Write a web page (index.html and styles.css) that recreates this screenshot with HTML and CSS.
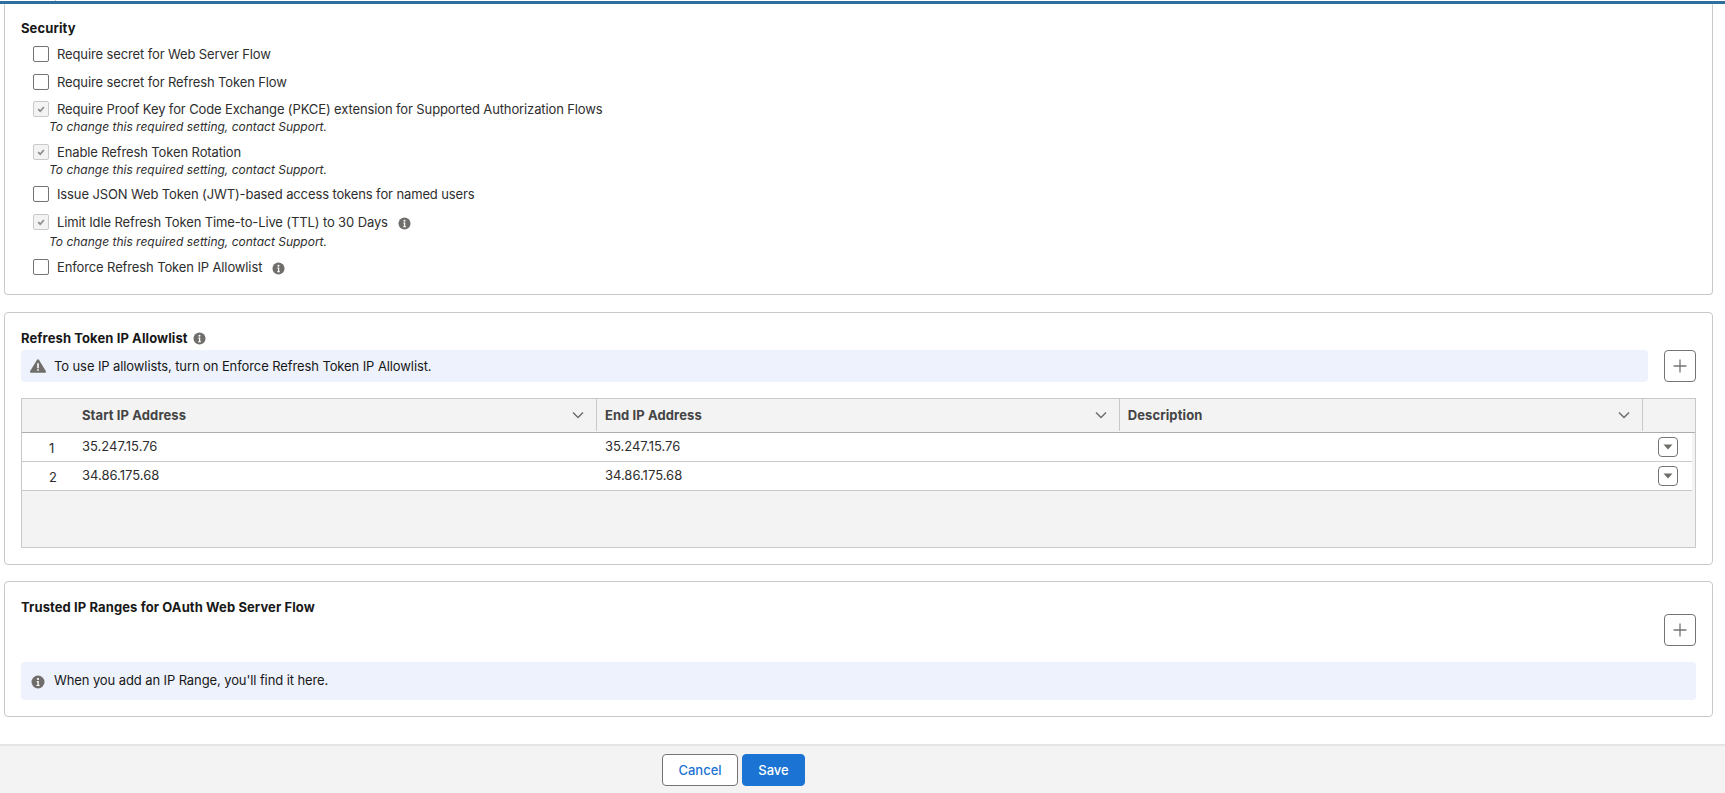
FILE: index.html
```html
<!DOCTYPE html>
<html lang="en">
<head>
    <meta charset="UTF-8">
    <meta name="viewport" content="width=device-width, initial-scale=1.0">
    <title>OAuth Policies</title>
    <link rel="stylesheet" href="styles.css">
</head>
<body>
    <svg class="defs" width="0" height="0">
        <symbol id="info" viewBox="0 0 14 14">
            <circle cx="7" cy="7" r="6.5" fill="#706e6b"/>
            <circle cx="7" cy="4" r="1.1" fill="#fff"/>
            <path d="M5.7 6h2.1v4h.8v1H5.500v-1h.9V7h-.7z" fill="#fff"/>
        </symbol>
        <symbol id="check" viewBox="0 0 16 16">
            <path d="M4.800 8.200l2.300 2.300 4.200-4.800" fill="none" stroke="#8c8c8c" stroke-width="1.900"/>
        </symbol>
        <symbol id="plus" viewBox="0 0 14 14">
            <path d="M7 0.500v13M0.500 7h13" fill="none" stroke="#747474" stroke-width="1.300"/>
        </symbol>
        <symbol id="chevron" viewBox="0 0 12 8">
            <path d="M1 1.500l5 5 5-5" fill="none" stroke="#706e6b" stroke-width="1.500"/>
        </symbol>
        <symbol id="caret" viewBox="0 0 10 6">
            <path d="M0.500 0.500h9L5 5.500z" fill="#706e6b"/>
        </symbol>
    </svg>

    <div class="top-bar"></div>

    <main class="content">
        <section class="card card-security">
            <h3 class="card-title">Security</h3>

            <label class="option"><span class="box"></span>Require secret for Web Server Flow</label>
            <label class="option"><span class="box"></span>Require secret for Refresh Token Flow</label>

            <label class="option tight"><span class="box disabled"><svg class="tick"><use href="#check"/></svg></span>Require Proof Key for Code Exchange (PKCE) extension for Supported Authorization Flows</label>
            <div class="hint">To change this required setting, contact Support.</div>

            <label class="option"><span class="box disabled"><svg class="tick"><use href="#check"/></svg></span>Enable Refresh Token Rotation</label>
            <div class="hint">To change this required setting, contact Support.</div>

            <label class="option tight"><span class="box"></span>Issue JSON Web Token (JWT)-based access tokens for named users</label>

            <label class="option has-help"><span class="box disabled"><svg class="tick"><use href="#check"/></svg></span>Limit Idle Refresh Token Time-to-Live (TTL) to 30 Days<svg class="info help"><use href="#info"/></svg></label>
            <div class="hint">To change this required setting, contact Support.</div>

            <label class="option has-help"><span class="box"></span>Enforce Refresh Token IP Allowlist<svg class="info help"><use href="#info"/></svg></label>
        </section>

        <section class="card card-allowlist">
            <h3 class="card-title">Refresh Token IP Allowlist<svg class="info title-info"><use href="#info"/></svg></h3>

            <div class="banner-row">
                <div class="banner">
                    <svg class="warn" viewBox="0 0 16 14"><path d="M8 0.300c.4 0 .7.2.9.5l6.900 11.300c.4.7 0 1.600-.9 1.600H1.100c-.9 0-1.300-.9-.9-1.600L7.100.8c.2-.3.5-.5.9-.5z" fill="#706e6b"/><path d="M7.200 4.200h1.600v5H7.200zM7.200 10.200h1.600v1.600H7.200z" fill="#fff"/></svg>
                    To use IP allowlists, turn on Enforce Refresh Token IP Allowlist.
                </div>
                <button class="icon-btn"><svg class="plus"><use href="#plus"/></svg></button>
            </div>

            <div class="table">
                <div class="table-head">
                    <div class="th"></div>
                    <div class="th"><span>Start IP Address</span><svg class="chevron"><use href="#chevron"/></svg></div>
                    <div class="th"><span>End IP Address</span><svg class="chevron"><use href="#chevron"/></svg></div>
                    <div class="th"><span>Description</span><svg class="chevron"><use href="#chevron"/></svg></div>
                    <div class="th"></div>
                </div>
                <div class="table-row">
                    <div class="td num">1</div>
                    <div class="td">35.247.15.76</div>
                    <div class="td">35.247.15.76</div>
                    <div class="td"></div>
                    <div class="td action"><button class="row-btn"><svg class="caret"><use href="#caret"/></svg></button></div>
                </div>
                <div class="table-row">
                    <div class="td num">2</div>
                    <div class="td">34.86.175.68</div>
                    <div class="td">34.86.175.68</div>
                    <div class="td"></div>
                    <div class="td action"><button class="row-btn"><svg class="caret"><use href="#caret"/></svg></button></div>
                </div>
            </div>
        </section>

        <section class="card card-ranges">
            <div class="ranges-head">
                <h3 class="card-title">Trusted IP Ranges for OAuth Web Server Flow</h3>
                <button class="icon-btn"><svg class="plus"><use href="#plus"/></svg></button>
            </div>
            <div class="banner banner-tall">
                <svg class="info banner-info"><use href="#info"/></svg>
                When you add an IP Range, you'll find it here.
            </div>
        </section>
    </main>

    <footer class="footer">
        <button class="btn">Cancel</button>
        <button class="btn btn-brand">Save</button>
    </footer>
</body>
</html>
```

FILE: styles.css
```css
* {
    box-sizing: border-box;
}

html, body {
    height: 100%;
}

body {
    margin: 0;
    display: flex;
    flex-direction: column;
    overflow: hidden;
    background-color: #fff;
    color: #181818;
    font-family: Inter, "Noto Sans", sans-serif;
    font-size: 13px;
}

.defs {
    position: absolute;
}

.top-bar {
    position: relative;
    height: 4px;
    flex-shrink: 0;
    border-top: 1px solid #fff;
    background-color: #2e6fa0;
}

/* leftover edge of whatever sits above the scrolled area */
.top-bar::before {
    content: "";
    position: absolute;
    top: -1px;
    left: 55px;
    width: 1px;
    height: 1px;
    background-color: #c9c9c9;
}

.content {
    flex: 1;
    padding: 0 12px 0 4px;
}

.card {
    border: 1px solid #c9c9c9;
    border-radius: 4px;
    padding: 16px 16px 0;
}

.card-title {
    margin: 0;
    font-size: 13px;
    font-weight: 700;
    letter-spacing: 0.1px;
    line-height: 18px;
}

.card-security {
    height: 291px;
    padding-top: 15px;
    border-top-color: #fff;
    border-top-left-radius: 0;
    border-top-right-radius: 0;
}

.card-security .card-title {
    line-height: 16px;
}

.option {
    display: flex;
    align-items: center;
    height: 20px;
    margin-top: 8px;
    padding-left: 12px;
    color: #2e2e2e;
    letter-spacing: -0.12px;
}

.option.tight {
    margin-top: 7px;
}

.option.has-help {
    margin-bottom: 2px;
}

.box {
    width: 16px;
    height: 16px;
    margin-right: 8px;
    flex-shrink: 0;
    border: 1px solid #747474;
    border-radius: 2px;
    background-color: #fff;
}

.box.disabled {
    border-color: #c9c9c9;
    background-color: #f3f3f3;
}

.tick {
    display: block;
    width: 14px;
    height: 14px;
}

.hint {
    height: 15px;
    padding-left: 28px;
    color: #2e2e2e;
    font-size: 12px;
    font-style: italic;
    line-height: 15px;
}

.info {
    width: 13px;
    height: 13px;
    flex-shrink: 0;
}

.help {
    margin: 2px 0 0 10px;
}

.title-info {
    margin-left: 5px;
    vertical-align: -2px;
}

.card-allowlist {
    height: 253px;
    margin-top: 17px;
}

.banner-row {
    display: flex;
    justify-content: space-between;
    margin-top: 3px;
}

.banner {
    display: flex;
    align-items: center;
    width: 1627px;
    height: 32px;
    padding-left: 9px;
    border-radius: 4px;
    background-color: #eef2fd;
    letter-spacing: -0.1px;
}

.warn {
    width: 16px;
    height: 14px;
    margin-right: 8px;
}

.icon-btn {
    display: flex;
    align-items: center;
    justify-content: center;
    width: 32px;
    height: 32px;
    padding: 0;
    border: 1px solid #747474;
    border-radius: 4px;
    background-color: #fff;
}

.plus {
    width: 14px;
    height: 14px;
}

.table {
    height: 150px;
    margin-top: 16px;
    border: 1px solid #c9c9c9;
    background-color: #f3f3f3;
}

.table-head,
.table-row {
    display: grid;
    grid-template-columns: 52px repeat(3, 522.9px) 1fr;
}

.table-head {
    height: 34px;
    border-bottom: 1px solid #aeaeae;
}

.th {
    display: flex;
    align-items: center;
    justify-content: space-between;
    height: 32px;
    padding: 0 12px 0 8px;
    border-right: 1px solid #c9c9c9;
    color: #444;
    font-weight: 700;
    letter-spacing: 0.1px;
}

.th:first-child,
.th:last-child {
    border-right: none;
}

.chevron {
    width: 12px;
    height: 8px;
}

.table-row {
    height: 29px;
    margin-right: 3px;
    border-bottom: 1px solid #c9c9c9;
    background-color: #fff;
}

.td {
    padding: 5px 8px 0;
    color: #2e2e2e;
    line-height: 16px;
}

.td.num {
    padding: 7px 0 0 27px;
}

.td.action {
    display: flex;
    align-items: center;
    justify-content: flex-end;
    padding: 0 14px 0 0;
}

.row-btn {
    display: flex;
    align-items: center;
    justify-content: center;
    width: 20px;
    height: 20px;
    padding: 0;
    border: 1px solid #747474;
    border-radius: 4px;
    background-color: #fff;
}

.caret {
    width: 10px;
    height: 6px;
}

.card-ranges {
    height: 136px;
    margin-top: 16px;
}

.ranges-head {
    position: relative;
    height: 64px;
}

.ranges-head .icon-btn {
    position: absolute;
    top: 16px;
    right: 0;
}

.banner-tall {
    width: 100%;
    height: 38px;
    padding-bottom: 2px;
}

.banner-info {
    width: 14px;
    height: 14px;
    margin: 3px 9px 0 1px;
}

.footer {
    display: flex;
    justify-content: center;
    align-items: center;
    flex-shrink: 0;
    gap: 4px;
    height: 49px;
    padding: 1px 258px 0 0;
    border-top: 2px solid #e5e5e5;
    background-color: #f3f3f3;
}

.btn {
    width: 76px;
    height: 32px;
    padding: 0;
    border: 1px solid #747474;
    border-radius: 4px;
    background-color: #fff;
    color: #1b74d3;
    font-family: inherit;
    font-size: 13px;
    font-weight: 500;
}

.btn-brand {
    width: 63px;
    border-color: #1b74d3;
    background-color: #1b74d3;
    color: #fff;
}
```
